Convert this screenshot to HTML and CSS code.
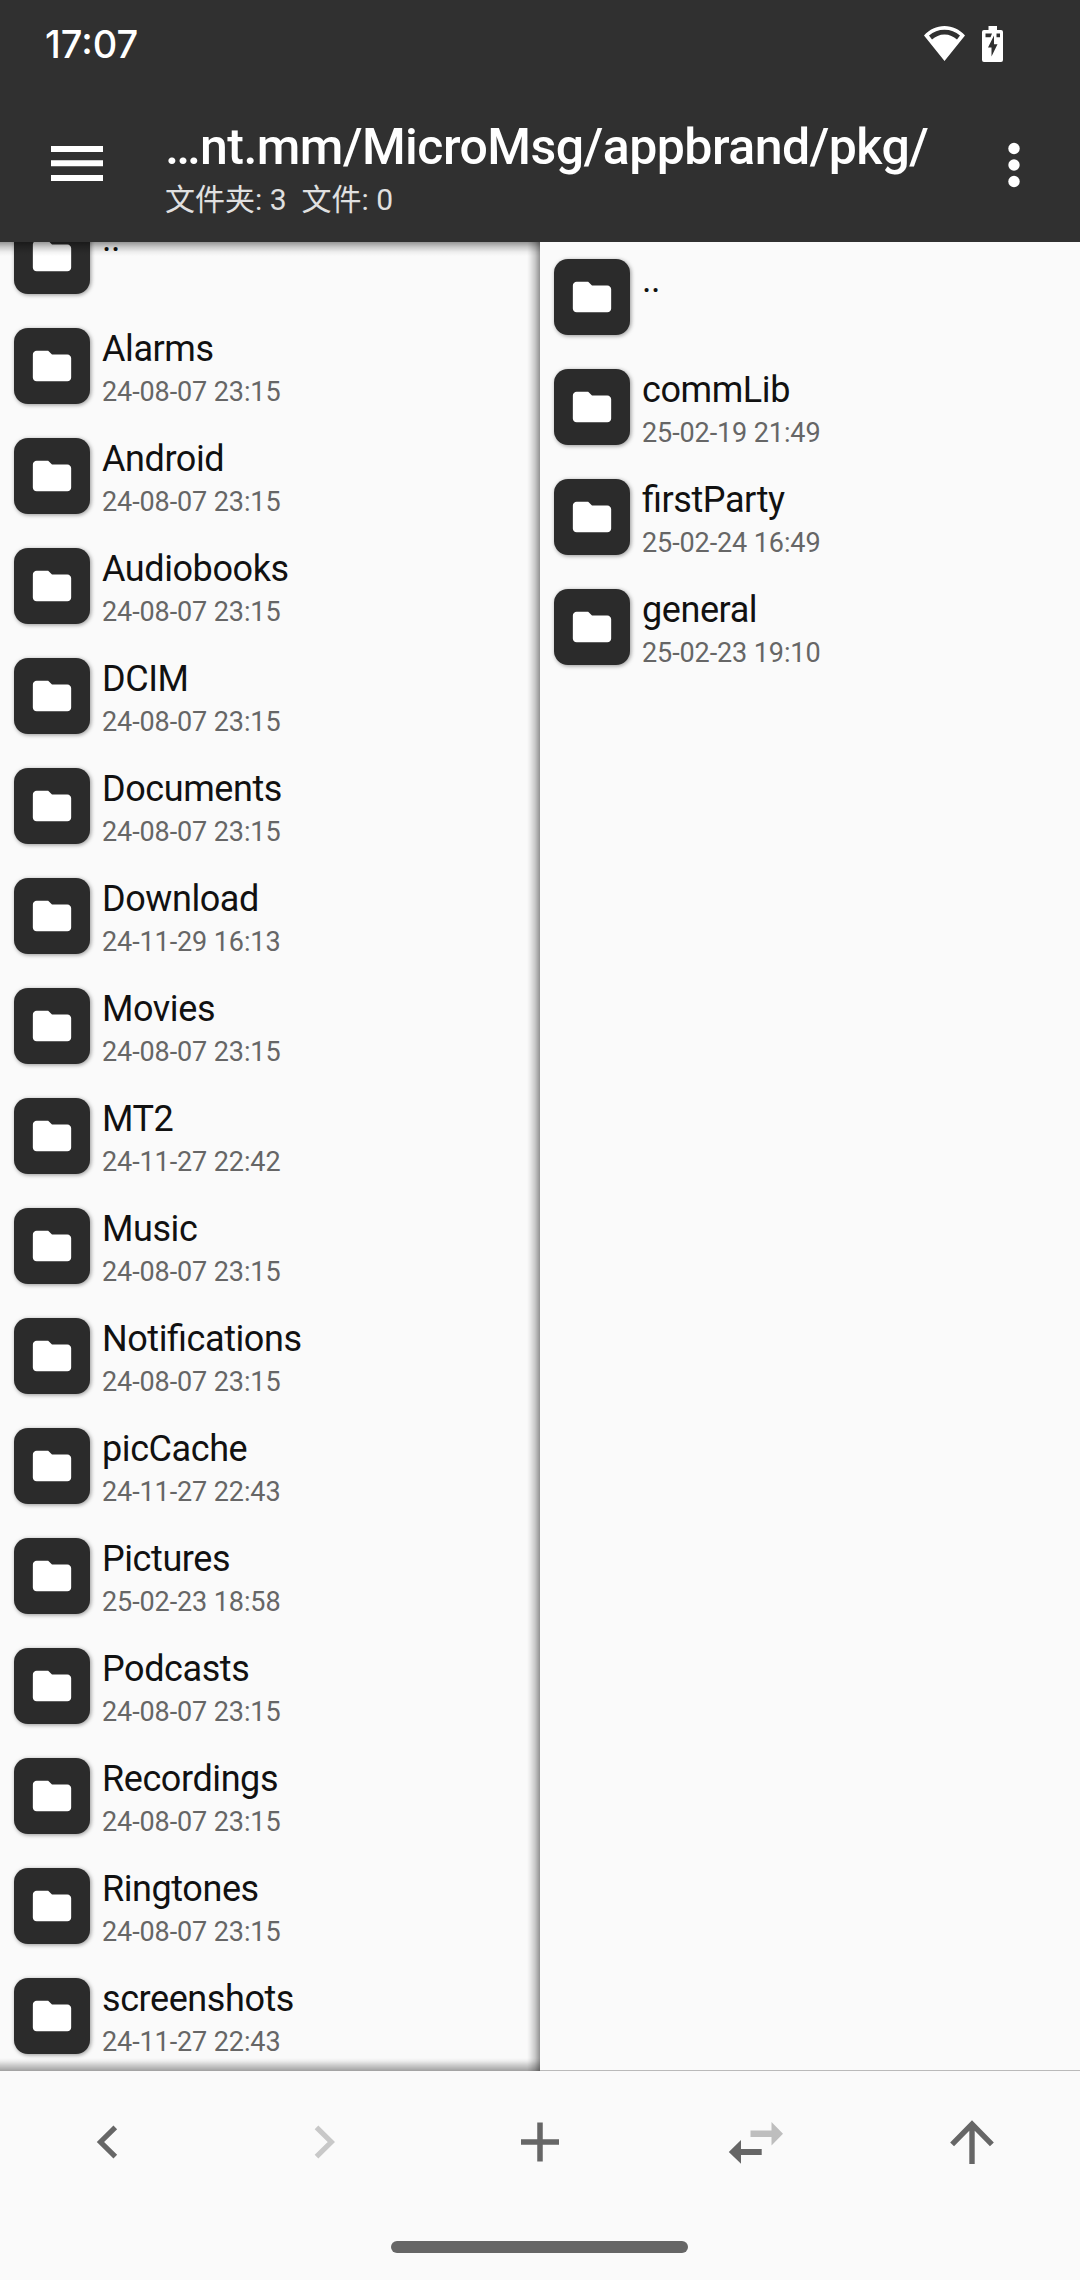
FILE: index.html
```
<!DOCTYPE html>
<html lang="zh-CN">
<head>
<meta charset="utf-8">
<title>文件管理</title>
<link rel="stylesheet" href="styles.css">
</head>
<body>
<svg width="0" height="0" class="defs"><defs>
<symbol id="folder" viewBox="0 0 24 24"><path fill="#fff" d="M10 4H4c-1.1 0-1.99.9-1.99 2L2 18c0 1.1.9 2 2 2h16c1.1 0 2-.9 2-2V8c0-1.1-.9-2-2-2h-8l-2-2z"/></symbol>
</defs></svg>
<div class="screen">
<header class="header">
<div class="status">
<span class="clock">17:07</span>
<div class="status-icons">
<svg width="41" height="35" viewBox="0 0 41 35"><path fill="#fff" fill-rule="evenodd" d="M0 9.5C5.5 3.500 12.500 0 20.500 0S35.500 3.500 41 9.500L20.500 35ZM5 9.500L8 13.500C11.500 10.500 15.500 8.500 20.500 8.500S29.500 10.500 33 13.500L36 9.500C31.500 5.800 26.500 3.800 20.500 3.800S9.500 5.800 5 9.500Z"/></svg>
<svg width="21" height="36" viewBox="0 0 21 36"><path fill="#fff" fill-rule="evenodd" d="M6.500 0H15V4H19Q21 4 21 6V34Q21 36 19 36H2Q0 36 0 34V6Q0 4 2 4H6.500ZM3.500 7.500V11.200H8.500L10 7.500ZM14.500 7.500V11.200H18V7.500ZM12 9.500L6 21.500H9.500V30.500L15.500 18.200H12Z"/></svg>
</div>
</div>
<div class="toolbar">
<svg class="menu" width="52" height="35" viewBox="0 0 52 35"><path fill="#fff" d="M0 0H52V6H0ZM0 14.300H52V20.300H0ZM0 29H52V35H0Z"/></svg>
<div class="heading">
<div class="path">…nt.mm/MicroMsg/appbrand/pkg/</div>
<div class="counts">文件夹: 3&nbsp; 文件: 0</div>
</div>
<svg class="more" width="12" height="46" viewBox="0 0 12 46" fill="#fff"><circle cx="6" cy="6.500" r="5.700"/><circle cx="6" cy="23" r="5.700"/><circle cx="6" cy="39.500" r="5.700"/></svg>
</div>
</header>
<main class="panes">
<section class="pane left"><ul class="list scrolled" id="left"></ul></section>
<section class="pane right"><ul class="list" id="right"></ul></section>
</main>
<nav class="actions">
<div class="action"><svg width="60" height="60" viewBox="0 0 60 60"><path fill="none" stroke="#666" stroke-width="5.200" d="M37.300 15.400L22.500 30L37.300 44.600"/></svg></div>
<div class="action"><svg width="60" height="60" viewBox="0 0 60 60"><path fill="none" stroke="#c8c8c8" stroke-width="5.200" d="M22.500 15.400L37.300 30L22.500 44.600"/></svg></div>
<div class="action"><svg width="60" height="60" viewBox="0 0 60 60"><path fill="none" stroke="#666" stroke-width="5.500" d="M30 10.500V49.500M11 30H49"/></svg></div>
<div class="action"><svg width="60" height="60" viewBox="0 0 60 60"><path fill="#bebebe" d="M24.500 18.600H45.500V10L57 21.700L45.500 33.400V24.900H24.500Z"/><path fill="#666" d="M35.700 37.100H15V28L2.800 40L15 51.800V43.100H35.700Z"/></svg></div>
<div class="action"><svg width="60" height="60" viewBox="0 0 60 60"><path fill="none" stroke="#666" stroke-width="5.400" d="M30 52V12M10.100 32.400L30 12L49.900 32.400"/></svg></div>
</nav>
<div class="gesture"><div class="handle"></div></div>
</div>
<script src="app.js"></script>
</body>
</html>
```
FILE: app.js
```
const D = '24-08-07 23:15';
const left = [
  ['..', ''], ['Alarms', D], ['Android', D], ['Audiobooks', D], ['DCIM', D],
  ['Documents', D], ['Download', '24-11-29 16:13'], ['Movies', D],
  ['MT2', '24-11-27 22:42'], ['Music', D], ['Notifications', D],
  ['picCache', '24-11-27 22:43'], ['Pictures', '25-02-23 18:58'],
  ['Podcasts', D], ['Recordings', D], ['Ringtones', D],
  ['screenshots', '24-11-27 22:43']
];
const right = [
  ['..', ''], ['commLib', '25-02-19 21:49'],
  ['firstParty', '25-02-24 16:49'], ['general', '25-02-23 19:10']
];
function fill(id, rows) {
  document.getElementById(id).innerHTML = rows.map(([name, date]) =>
    `<li class="row"><div class="tile"><svg width="46" height="46"><use href="#folder"/></svg></div>` +
    `<div class="info"><div class="name">${name}</div><div class="date">${date}</div></div></li>`
  ).join('');
}
fill('left', left);
fill('right', right);
```
FILE: styles.css
```
* { box-sizing: border-box; }
body { margin: 0; background: #fafafa; font-family: Roboto, "Noto Sans CJK SC", sans-serif; }
svg { display: block; flex: none; }
.defs { position: absolute; }
.screen { width: 1080px; height: 2280px; display: flex; flex-direction: column; overflow: hidden; }
.header { height: 242px; flex: none; background: #303030; color: #fff; }
.status { height: 84px; padding: 0 77px 0 45px; display: flex; justify-content: space-between; }
.clock { font-family: Inter, sans-serif; font-size: 38px; font-weight: 500; line-height: 44px; padding-top: 22px; }
.status-icons { display: flex; gap: 17px; padding-top: 26px; }
.toolbar { height: 158px; display: flex; padding: 0 60px 0 51px; }
.menu { margin-top: 62px; }
.heading { margin-left: 62px; flex: 1; padding-top: 33px; white-space: nowrap; }
.path { font-size: 50px; font-weight: 500; line-height: 60px; letter-spacing: -0.5px; }
.counts { font-size: 30px; line-height: 36px; margin-top: 5px; color: #e0e0e0; }
.more { margin-top: 58px; }
.panes { height: 1829px; flex: none; display: grid; grid-template-columns: 540px 540px; }
.pane { position: relative; overflow: hidden; min-height: 0; }
.right { border-bottom: 1px solid #bababa; }
.left::after {
  content: ""; position: absolute; inset: 0;
  background:
    linear-gradient(to bottom, rgba(0,0,0,.4), rgba(0,0,0,.2) 5px, rgba(0,0,0,.05) 10px, transparent 14px),
    linear-gradient(to top, rgba(0,0,0,.36), rgba(0,0,0,.18) 6px, rgba(0,0,0,.05) 10px, transparent 13px),
    linear-gradient(to left, rgba(0,0,0,.42), rgba(0,0,0,.2) 5px, rgba(0,0,0,.06) 10px, transparent 13px);
}
.list { list-style: none; margin: 0; padding: 0; }
.scrolled { margin-top: -41px; }
.row { height: 110px; padding-left: 14px; display: flex; align-items: center; }
.tile { width: 76px; height: 76px; flex: none; border-radius: 14px; background: #2b2b2b; display: grid; place-items: center; box-shadow: 1px 1px 4px rgba(0,0,0,.4); }
.tile svg { margin: -1px 1px 0 0; }
.info { height: 110px; margin-left: 12px; padding-top: 17px; white-space: nowrap; }
.name { font-size: 36px; line-height: 42px; letter-spacing: -0.42px; font-feature-settings: "liga" 1; color: #111; }
.date { font-size: 27px; line-height: 34px; margin-top: 5px; letter-spacing: -0.1px; color: #666; }
.actions { height: 142px; flex: none; display: grid; grid-template-columns: repeat(5, 1fr); }
.action { display: grid; place-items: center; }
.gesture { height: 67px; padding: 28px 1px 0 0; display: flex; justify-content: center; }
.handle { width: 297px; height: 12px; border-radius: 6px; background: #666; }
```
